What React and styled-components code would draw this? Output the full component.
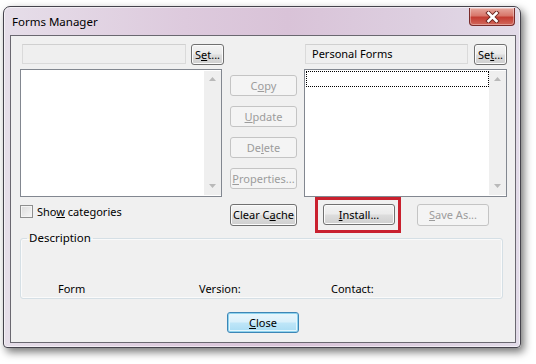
import React from "react";
import styled, { createGlobalStyle, css } from "styled-components";

const Global = createGlobalStyle`
  html, body { margin: 0; padding: 0; background: #ffffff; }
  body { width: 536px; height: 364px; overflow: hidden; font-family: "Noto Sans", "Open Sans", sans-serif; font-size: 11px; color: #000; }
  * { box-sizing: border-box; }
`;

const Window = styled.div`
  margin: 6px 0 0 3px;
  width: 518px;
  height: 342px;
  display: flex;
  flex-direction: column;
  border: 1px solid #45434c;
  border-radius: 7px 7px 4px 4px;
  background: linear-gradient(90deg, #e6dee9 0%, #ddcadd 35%, #d9c3d8 55%, #ddcfe0 80%, #e2dbe8 100%);
  box-shadow: inset 0 0 0 1px rgba(255,255,255,0.55), 3px 4px 8px rgba(0,0,0,0.55);
`;

const TitleBar = styled.div`
  height: 28px;
  display: flex;
  align-items: flex-start;
  justify-content: space-between;
  padding-left: 8px;
`;

const Title = styled.div`
  margin-top: 7px;
  font-size: 11.5px;
  line-height: 16px;
  color: #000;
`;

const CloseX = styled.div`
  margin: 1px 5px 0 0;
  width: 46px;
  height: 18px;
  border: 1px solid #7a2b2a;
  border-top: none;
  border-radius: 0 0 4px 4px;
  background: linear-gradient(#e7a89e 0%, #d8776b 45%, #c33d32 55%, #d2685c 100%);
  box-shadow: inset 0 0 0 1px rgba(255,255,255,0.35);
  display: flex;
  align-items: center;
  justify-content: center;
`;

const Client = styled.div`
  margin: 0 4px 4px 6px;
  flex: 1;
  border: 1px solid #6a6870;
  background: #f0f0f0;
  padding: 8px 7px 0 9px;
  display: flex;
  flex-direction: column;
`;

const TopRow = styled.div`
  display: flex;
  align-items: flex-start;
  height: 21px;
`;

const Field = styled.div`
  margin-left: ${(p) => p.$ml}px;
  width: ${(p) => p.$w}px;
  height: 20px;
  border: 1px solid #dadada;
  border-top-color: #d0d0d0;
  background: #efefef;
  padding-left: 6px;
  line-height: 17px;
`;

const btnBase = css`
  height: ${(p) => p.$h || 21}px;
  width: ${(p) => p.$w}px;
  margin-left: ${(p) => p.$ml || 0}px;
  border-radius: 3px;
  font-family: inherit;
  font-size: 11px;
  line-height: 16px;
  padding: 0;
  display: flex;
  align-items: center;
  justify-content: center;
  white-space: nowrap;
`;

const Button = styled.div`
  ${btnBase}
  border: 1px solid #707070;
  color: #000;
  background: linear-gradient(#f3f3f3 0%, #ebebeb 48%, #dddddd 52%, #cfcfcf 100%);
  box-shadow: inset 0 0 0 1px #fbfbfb;
`;

const DisabledButton = styled.div`
  ${btnBase}
  border: 1px solid #c4c4c4;
  color: #9c9c9c;
  background: #f4f4f4;
`;

const DefaultButton = styled.div`
  ${btnBase}
  border: 1px solid #3d86b6;
  color: #000;
  background: linear-gradient(#eaf6fc 0%, #d9f0fb 48%, #bfe6f8 52%, #a9dcf4 100%);
  box-shadow: inset 0 0 0 1px #8fd3ee, inset 0 0 0 2px #e4f6fd;
`;

const HighlightFrame = styled.div`
  margin: -7px 0 0 18px;
  padding: 4px 3px 5px 5px;
  border: 3px solid #c9202e;
`;

const ListRow = styled.div`
  display: flex;
  margin-top: 4px;
  height: 128px;
`;

const ListBox = styled.div`
  width: ${(p) => p.$w}px;
  margin-left: ${(p) => p.$ml || 0}px;
  height: 128px;
  border: 1px solid #828790;
  background: #fff;
  display: flex;
  padding: 1px 0 1px 1px;
`;

const ListArea = styled.div`
  flex: 1;
`;

const FocusItem = styled.div`
  height: 16px;
  border: 1px dotted #000;
`;

const ScrollBar = styled.div`
  width: 17px;
  background: #efefef;
  display: flex;
  flex-direction: column;
  justify-content: space-between;
  align-items: center;
  padding: 6px 0 7px;
`;

const ButtonColumn = styled.div`
  margin-left: 8px;
  width: 67px;
  padding-top: 6px;
  display: flex;
  flex-direction: column;
  gap: 10px;
`;

const ActionRow = styled.div`
  display: flex;
  align-items: flex-start;
  margin-top: 7px;
  height: 22px;
`;

const CheckLabel = styled.label`
  width: 210px;
  display: flex;
  align-items: center;
  gap: 4px;
  margin-top: 1px;
  line-height: 13px;
`;

const CheckBox = styled.span`
  width: 13px;
  height: 13px;
  border: 1px solid #8e8f8f;
  background: linear-gradient(135deg, #dcdcdc 0%, #f6f6f6 100%);
  box-shadow: inset 0 0 0 1px #f4f4f4;
`;

const Group = styled.fieldset`
  margin: 4px 5px 0 0;
  padding: 0 0 1px 0;
  height: 69px;
  border: 1px solid #d5dfe5;
  border-radius: 3px;
  box-shadow: inset 0 0 0 1px #fafafa;
`;

const Legend = styled.legend`
  margin-left: 6px;
  padding: 0 2px;
  line-height: 16px;
  font-size: 11.5px;
`;

const InfoRow = styled.div`
  display: grid;
  grid-template-columns: 141px 132px auto;
  padding: 35px 0 0 37px;
  line-height: 16px;
`;

const Footer = styled.div`
  display: flex;
  justify-content: center;
  margin-top: 13px;
  padding-right: 2px;
`;

const Arrow = ({ up }) => (
  <svg width="7" height="4" viewBox="0 0 7 4">
    <path d={up ? "M0 4 L3.5 0 L7 4 Z" : "M0 0 L3.5 4 L7 0 Z"} fill="#b9b9b9" />
  </svg>
);

const XIcon = () => (
  <svg width="15" height="12" viewBox="0 0 15 12">
    <path d="M3.5 2 L11.5 10 M11.5 2 L3.5 10" stroke="#6b2520" strokeWidth="4.4" strokeLinecap="square" />
    <path d="M3.5 2 L11.5 10 M11.5 2 L3.5 10" stroke="#ffffff" strokeWidth="2.6" strokeLinecap="square" />
  </svg>
);

export default function App() {
  return (
    <>
      <Global />
      <Window>
        <TitleBar>
          <Title>Forms Manager</Title>
          <CloseX><XIcon /></CloseX>
        </TitleBar>
        <Client>
          <TopRow>
            <Field $ml={2} $w={164} />
            <Button $w={33} $ml={5}>S<u>e</u>t...</Button>
            <Field $ml={81} $w={163}>Personal Forms</Field>
            <Button $w={33} $ml={6}>Se<u>t</u>...</Button>
          </TopRow>
          <ListRow>
            <ListBox $w={202}>
              <ListArea />
              <ScrollBar><Arrow up /><Arrow /></ScrollBar>
            </ListBox>
            <ButtonColumn>
              <DisabledButton $w={67}>C<u>o</u>py</DisabledButton>
              <DisabledButton $w={67}><u>U</u>pdate</DisabledButton>
              <DisabledButton $w={67}>De<u>l</u>ete</DisabledButton>
              <DisabledButton $w={67}><u>P</u>roperties...</DisabledButton>
            </ButtonColumn>
            <ListBox $w={203} $ml={7}>
              <ListArea><FocusItem /></ListArea>
              <ScrollBar><Arrow up /><Arrow /></ScrollBar>
            </ListBox>
          </ListRow>
          <ActionRow>
            <CheckLabel><CheckBox /><span>Sho<u>w</u> categories</span></CheckLabel>
            <Button $w={67} $h={22}>Clear C<u>a</u>che</Button>
            <HighlightFrame>
              <Button $w={72}><u>I</u>nstall...</Button>
            </HighlightFrame>
            <DisabledButton $w={72} $ml={16} $h={22}><u>S</u>ave As...</DisabledButton>
          </ActionRow>
          <Group>
            <Legend>Description</Legend>
            <InfoRow>
              <span>Form</span>
              <span>Version:</span>
              <span>Contact:</span>
            </InfoRow>
          </Group>
          <Footer>
            <DefaultButton $w={72}><u>C</u>lose</DefaultButton>
          </Footer>
        </Client>
      </Window>
    </>
  );
}
